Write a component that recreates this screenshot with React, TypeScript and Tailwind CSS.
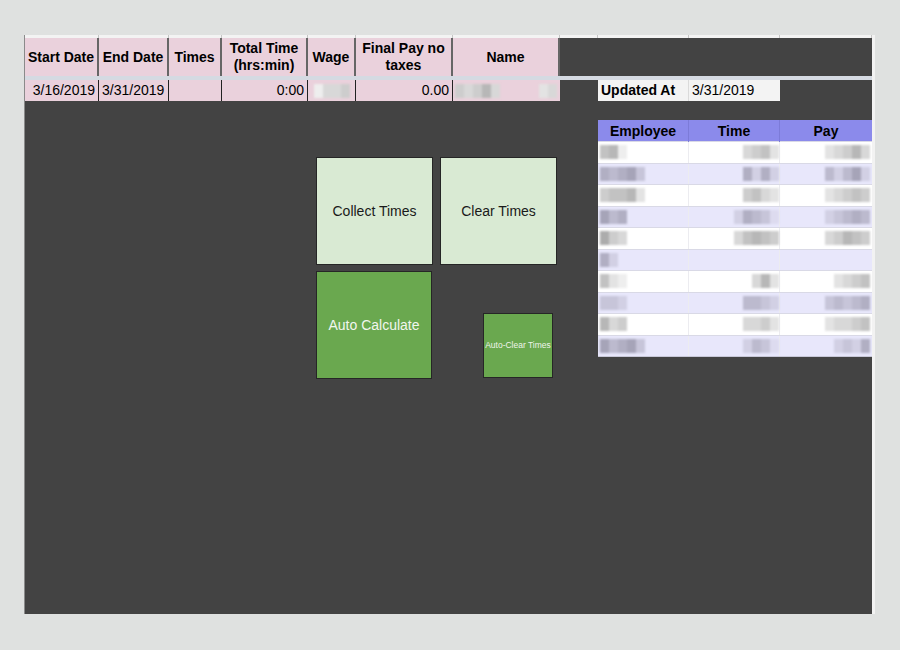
import React from 'react'

// column widths of the sheet, left to right (x = 25 .. 872)
const COLS = 'grid-cols-[74px_70px_53px_86px_48px_97px_107px_38px_91px_91px_92px]'

const font = "font-['Liberation_Sans',Arial,sans-serif]"

type Cell = { label: string; sub?: string }

const headers: Cell[] = [
  { label: 'Start Date' },
  { label: 'End Date' },
  { label: 'Times' },
  { label: 'Total Time', sub: '(hrs:min)' },
  { label: 'Wage' },
  { label: 'Final Pay no', sub: 'taxes' },
  { label: 'Name' },
]

// blurred (pixelated) values, given as grey levels 0 (dark) .. 9 (light)
const employees: { name: number[]; time: number[]; pay: number[] }[] = [
  { name: [4, 3, 8], time: [6, 5, 4, 7], pay: [7, 6, 5, 3, 6] },
  { name: [3, 4, 3, 2, 5], time: [3, 6, 3, 6], pay: [4, 6, 4, 2, 6] },
  { name: [5, 4, 4, 3, 7], time: [5, 4, 6, 7], pay: [7, 6, 5, 4, 5] },
  { name: [2, 4, 3], time: [6, 3, 4, 5, 7], pay: [6, 5, 4, 3, 4] },
  { name: [2, 5, 6], time: [6, 4, 3, 4, 5], pay: [6, 5, 3, 4, 5] },
  { name: [3, 6], time: [], pay: [] },
  { name: [4, 7, 8], time: [6, 3, 7], pay: [7, 6, 5, 4] },
  { name: [5, 5, 6], time: [4, 4, 5, 6], pay: [5, 4, 5, 4, 3] },
  { name: [3, 6, 5], time: [6, 6, 5, 7], pay: [7, 6, 6, 5, 4] },
  { name: [2, 4, 3, 2, 5], time: [6, 4, 5, 7], pay: [6, 5, 6, 3] },
]

function Smudge({ levels, tint = false, h = 14 }: { levels: number[]; tint?: boolean; h?: number }) {
  return (
    <div className="flex blur-[0.8px]">
      {levels.map((n, i) => {
        const v = 150 + n * 11
        const bg = tint ? `rgb(${v - 6}, ${v - 8}, ${v + 12})` : `rgb(${v}, ${v}, ${v})`
        return <span key={i} style={{ width: 9, height: h, background: bg }} />
      })}
    </div>
  )
}

function GreenButton({ label, className }: { label: string; className: string }) {
  return (
    <div className={`flex items-center justify-center border border-[#262626] ${className}`}>
      {label}
    </div>
  )
}

export default function App() {
  return (
    <div className={`h-[650px] w-[900px] bg-[#dfe1e0] pt-[35px] pl-[24px] ${font}`}>
      <div className="flex">
        <div className="flex w-[848px] flex-col border-l border-[#8a8a8a]">
          {/* column ticks above the header */}
          <div className={`grid h-[3px] bg-[#f3f3f3] ${COLS}`}>
            {Array.from({ length: 11 }).map((_, i) => (
              <div key={i} className="border-r border-[#c6c6c6]" />
            ))}
          </div>

          {/* Header row */}
          <div className={`grid h-[38px] ${COLS}`}>
            {headers.map(h => (
              <div
                key={h.label}
                className="flex flex-col items-center justify-center border-r-2 border-[#666] bg-[#ead1dc] text-[14px] font-bold leading-[17px] text-black"
              >
                <span>{h.label}</span>
                {h.sub && <span>{h.sub}</span>}
              </div>
            ))}
            <div className="col-span-4 bg-[#434343]" />
          </div>

          {/* frozen row divider */}
          <div className="h-[4px] bg-[#d5dae2]" />

          {/* Data row */}
          <div className={`grid h-[21px] text-[14px] leading-[21px] text-black ${COLS}`}>
            <div className="border-r border-[#222] bg-[#ead1dc] pr-[3px] text-right">3/16/2019</div>
            <div className="border-r border-[#222] bg-[#ead1dc] pl-[3px]">3/31/2019</div>
            <div className="border-r border-[#222] bg-[#ead1dc]" />
            <div className="border-r border-[#222] bg-[#ead1dc] pr-[3px] text-right">0:00</div>
            <div className="flex items-center justify-center border-r border-[#222] bg-[#ead1dc]">
              <Smudge levels={[8, 6, 6, 5]} />
            </div>
            <div className="border-r border-[#222] bg-[#ead1dc] pr-[3px] text-right">0.00</div>
            <div className="flex items-center justify-between bg-[#ead1dc] pr-[3px] pl-[2px]">
              <Smudge levels={[5, 6, 5, 3, 6]} />
              <Smudge levels={[7, 6]} />
            </div>
            <div className="bg-[#434343]" />
            <div className="border-r border-[#dadada] bg-[#f3f3f3] pl-[3px] font-bold">Updated At</div>
            <div className="bg-[#f3f3f3] pl-[3px]">3/31/2019</div>
            <div className="bg-[#434343]" />
          </div>

          {/* Canvas below the data */}
          <div className="flex h-[513px] items-start bg-[#434343]">
            {/* Script buttons */}
            <div className="mt-[56px] ml-[291px] flex flex-col text-[14px]">
              <div className="flex gap-[7px] text-[#1a1a1a]">
                <GreenButton label="Collect Times" className="h-[108px] w-[117px] bg-[#d9ead3]" />
                <GreenButton label="Clear Times" className="h-[108px] w-[117px] bg-[#d9ead3]" />
              </div>
              <div className="mt-[6px] flex items-start">
                <GreenButton
                  label="Auto Calculate"
                  className="h-[108px] w-[116px] bg-[#6aa84f] text-[14px] text-[#f1f6ee]"
                />
                <GreenButton
                  label="Auto-Clear Times"
                  className="mt-[42px] ml-[51px] h-[65px] w-[70px] whitespace-nowrap bg-[#6aa84f] text-[8.5px] text-[#eef4ea]"
                />
              </div>
            </div>

            {/* Employee summary */}
            <div className="mt-[19px] ml-[41px] w-[274px] text-[14px]">
              <div className="grid h-[21px] grid-cols-[91px_91px_92px] bg-[#8b8aeb] font-bold leading-[22px] text-black">
                <div className="border-r border-[#7c7bd8] text-center">Employee</div>
                <div className="border-r border-[#7c7bd8] text-center">Time</div>
                <div className="text-center">Pay</div>
              </div>
              {employees.map((e, i) => {
                const lav = i % 2 === 1
                return (
                  <div
                    key={i}
                    className={`grid h-[21.5px] grid-cols-[91px_91px_92px] border-t border-[#d9d9e6] ${
                      lav ? 'bg-[#e8e7fb]' : 'bg-white'
                    }`}
                  >
                    <div className="flex items-center border-r border-[#ececf0] pl-[2px]">
                      <Smudge levels={e.name} tint={lav} />
                    </div>
                    <div className="flex items-center justify-end border-r border-[#ececf0]">
                      <Smudge levels={e.time} tint={lav} />
                    </div>
                    <div className="flex items-center justify-end pr-[2px]">
                      <Smudge levels={e.pay} tint={lav} />
                    </div>
                  </div>
                )
              })}
              <div className="h-px bg-[#c8c8d8]" />
            </div>
          </div>
        </div>
        <div className="w-[3px] bg-[#f2f2f2]" />
      </div>
    </div>
  )
}
